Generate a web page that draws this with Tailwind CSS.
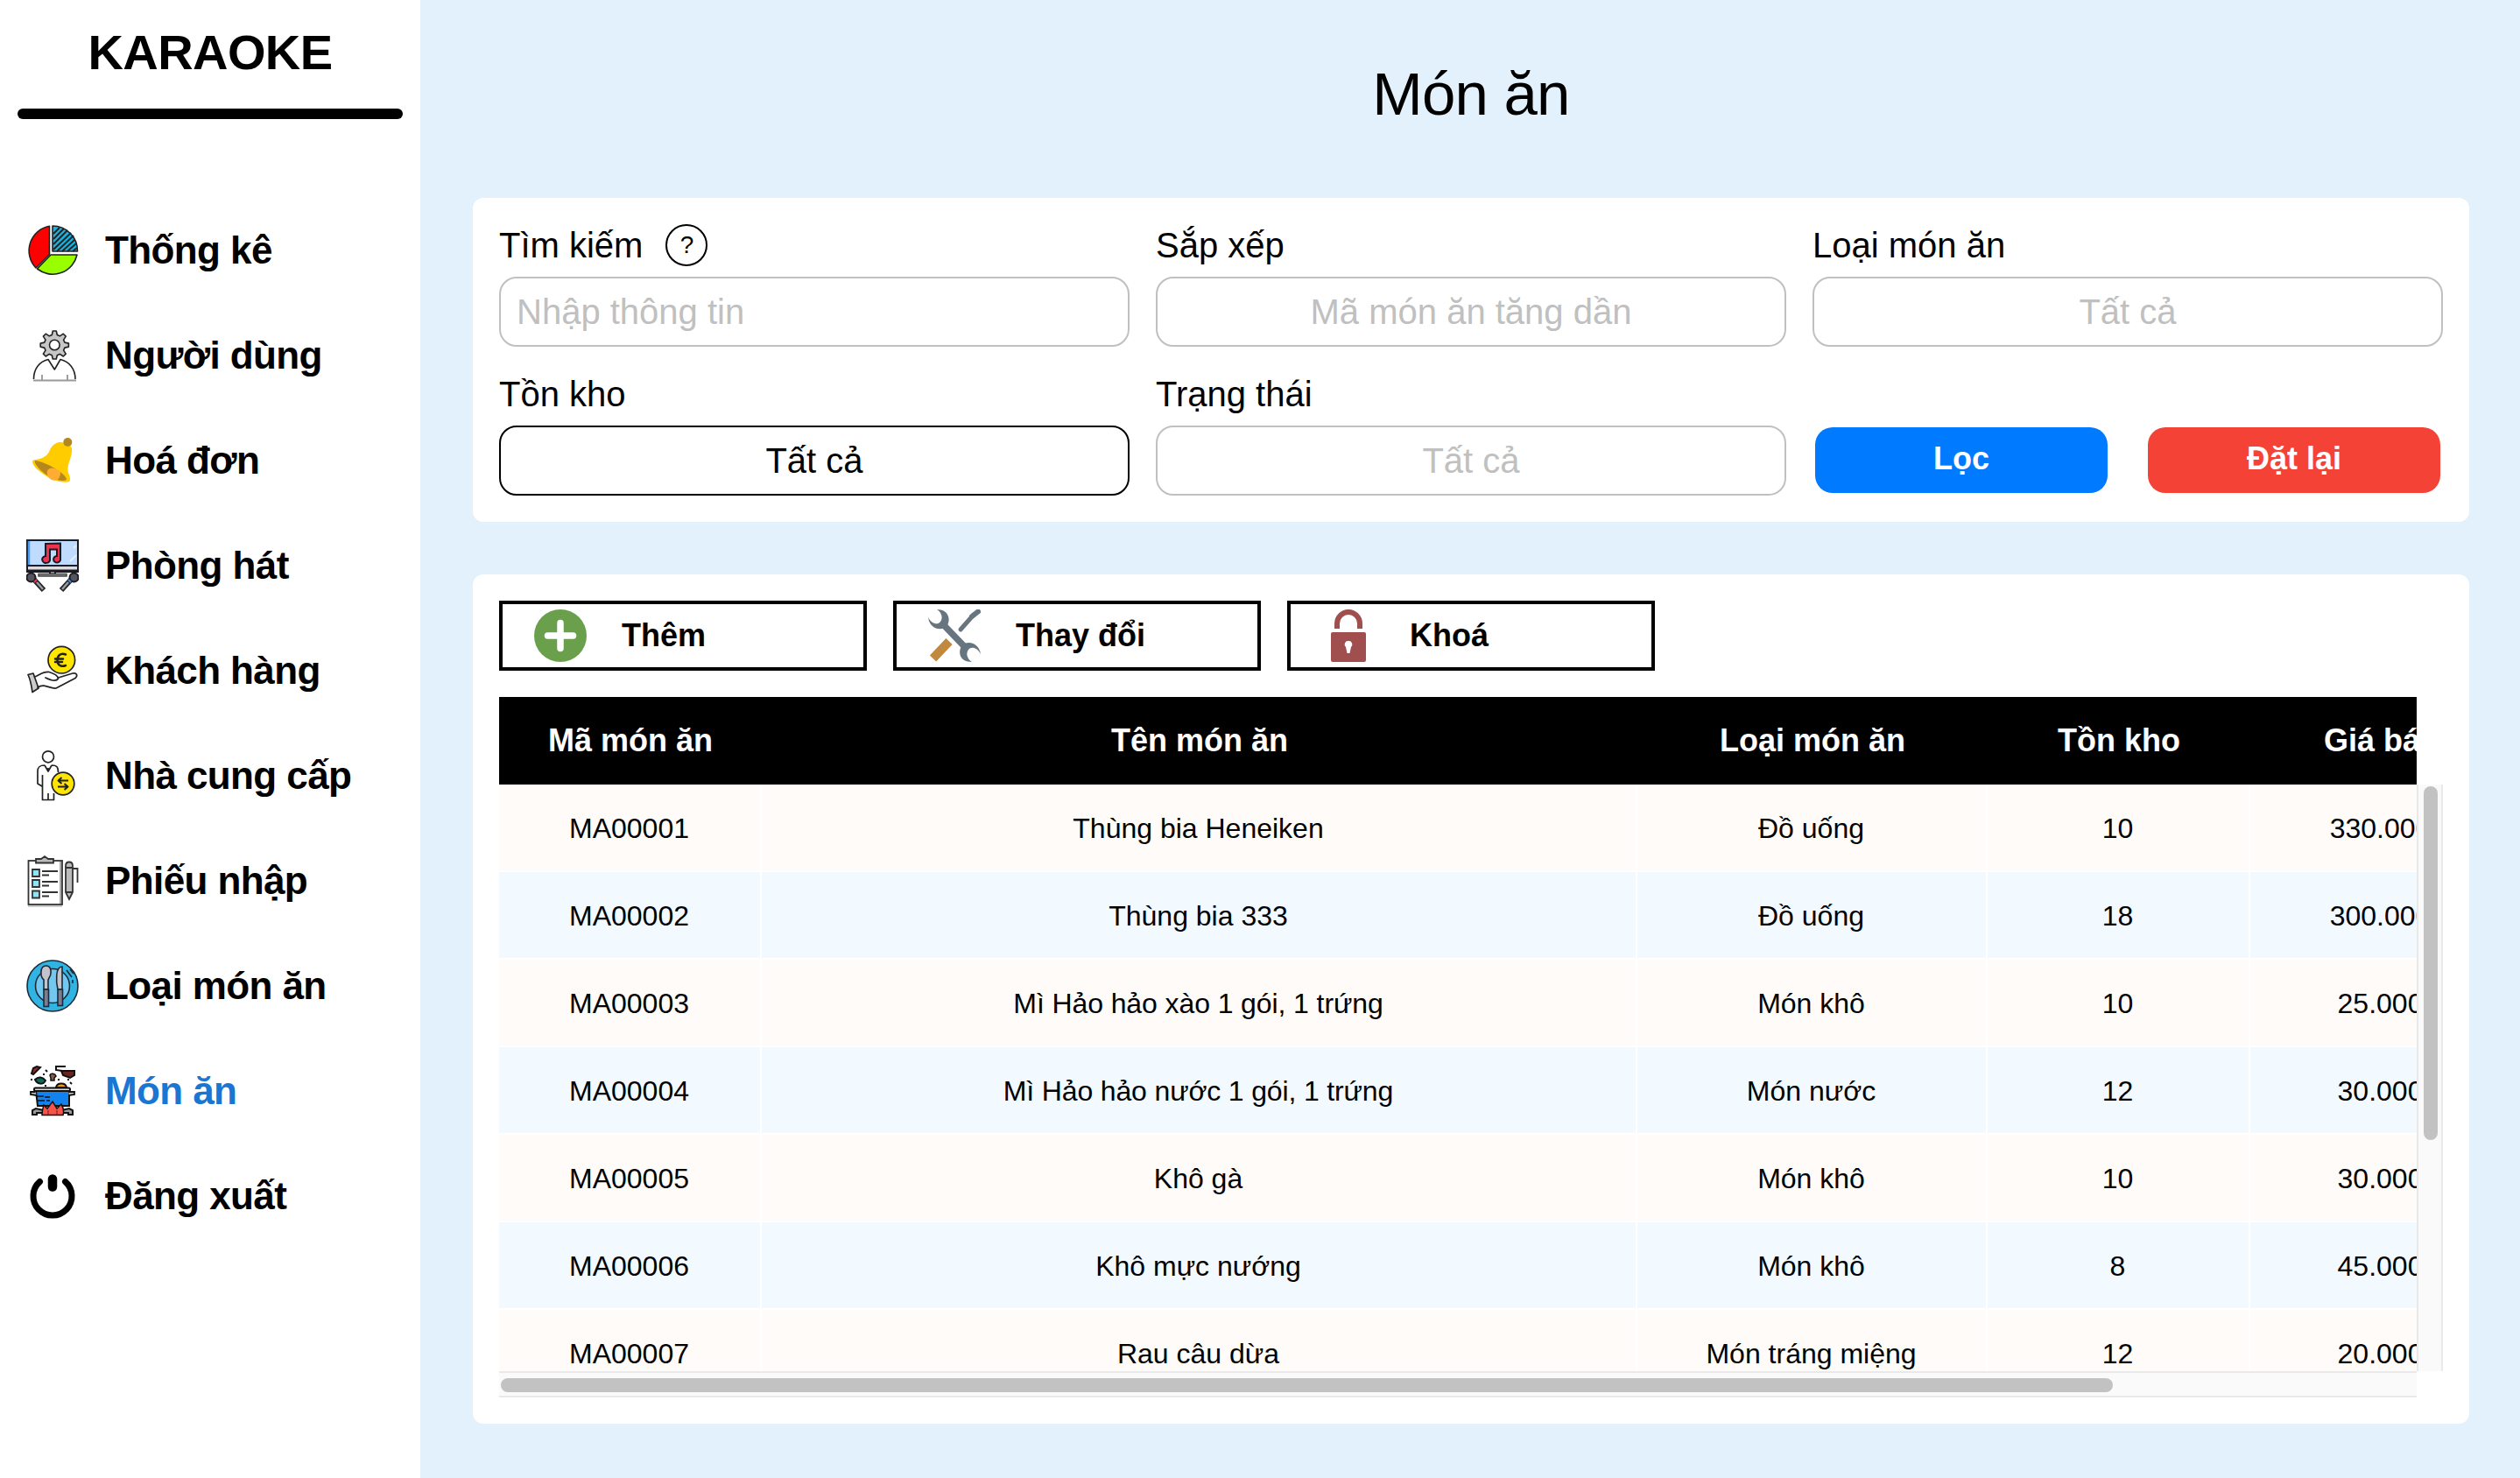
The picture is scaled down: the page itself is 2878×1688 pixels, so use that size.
<!DOCTYPE html>
<html lang="vi">
<head>
<meta charset="utf-8">
<title>Karaoke - Món ăn</title>
<script src="https://cdn.jsdelivr.net/npm/@tailwindcss/browser@4"></script>
</head>
<body class="flex h-[1688px] w-[2878px] overflow-hidden bg-[#e3f1fd] font-['Liberation_Sans',Arial,sans-serif] text-black">

<aside class="flex h-full w-[480px] shrink-0 flex-col bg-white">
  <h1 class="h-[124px] pt-[30px] text-center text-[56px] leading-[60px] font-bold tracking-[-0.6px]">KARAOKE</h1>
  <div class="mx-5 h-3 rounded-full bg-black"></div>
  <nav class="mt-[90px] flex flex-col text-[44px] font-bold tracking-[-0.6px] [&>a]:flex [&>a]:h-[120px] [&>a]:items-center [&>a]:gap-[30px] [&>a]:pl-[30px] [&_svg]:size-[60px] [&_svg]:shrink-0">
    <a>
      <svg viewBox="0 0 60 60" stroke="#222" stroke-width="1.6" stroke-linejoin="round">
        <path d="M26.500 2.300A28.500 28.500 0 0 0 11 50L26.500 34.500Z" fill="#f00"/>
        <path d="M30 2A28.500 28.500 0 0 1 58.500 31H30Z" fill="#12b5e5"/>
        <path d="M31 11l7-7M31 17L43 5M31 23L47 7M31 29L51 10M35 31L54 13M41 31l14-13M47 31l10-9M53 31l5-4" fill="none" stroke-width="2"/>
        <path d="M28 35H58A28.500 28.500 0 0 1 12.500 51Z" fill="#9f0"/>
      </svg>
      <span>Thống kê</span>
    </a>
    <a>
      <svg viewBox="0 0 60 60" stroke="#222" stroke-width="1.600" stroke-linejoin="round">
        <path d="M30.300 2h4l1 4.500 3 1.300 4-2.600 2.900 2.900-2.600 4 1.300 3 4.500 1v4l-4.500 1-1.300 3 2.600 4-2.900 2.900-4-2.600-3 1.300-1 4.300h-4l-1-4.300-3-1.300-4 2.600-2.900-2.900 2.600-4-1.300-3-4.500-1v-4l4.500-1 1.300-3-2.600-4 2.900-2.900 4 2.600 3-1.300z" fill="#c6c6c6"/>
        <circle cx="32.300" cy="18" r="5.800" fill="#fff"/>
        <path d="M8.500 57C8.500 45 15 37 25 34.500L32.300 46 39 34.500C49 37 56 45 56 57" fill="none"/>
        <path d="M18 52v6M47 52v6" stroke="#888" fill="none"/>
        <path d="M8 58.500h49" stroke="#999" stroke-width="2" fill="none"/>
      </svg>
      <span>Người dùng</span>
    </a>
    <a>
      <svg viewBox="0 0 60 60">
        <path d="M7 31C8 27 20 31 26 20 30 10 37 7 44 10 50 11 53 15 52 20 51 30 46 34 48 44 50 48 51 52 49 54 45 56 36 54 29 51 17 45 7 37 7 31Z" fill="#fc0"/>
        <path d="M10 30C20 31 42 42 46 51 45 55 33 52 27 49 17 43 8 33 10 30Z" fill="#b4881c"/>
        <path d="M24 42C27 36 35 39 39 43 39 52 34 54 29 52 25 50 23 46 24 42Z" fill="#ffac33"/>
        <circle cx="47.300" cy="9" r="5" fill="#b4881c"/>
      </svg>
      <span>Hoá đơn</span>
    </a>
    <a>
      <svg viewBox="0 0 60 60" stroke="#1b1b22" stroke-width="2">
        <rect x="1" y="1" width="58" height="36" fill="#bfdcff"/>
        <path d="M3 2v27" stroke="#4c9bf5" stroke-width="2.500"/>
        <path d="M54 10l3-3M50 25l7-7" stroke="#e4f0ff"/>
        <rect x="1" y="30" width="58" height="5.500" fill="#ddd"/>
        <path d="M22 5L39 4.500V22a4 3.800 0 1 1-4-3V11.500H27V22a4.500 4 0 1 1-5-3Z" fill="#f2304f"/>
        <rect x="27" y="36" width="6" height="4" fill="#888"/>
        <rect x="14" y="39.500" width="32" height="2.500" fill="#999" stroke="#444" stroke-width="1.500"/>
        <path d="M9 46L20 58M51 46L40 58" stroke="#26262c" stroke-width="6"/>
        <path d="M12 49L19 57M48 49L41 57" stroke="#9a9aa2" stroke-width="2.500"/>
        <circle cx="5.500" cy="43.500" r="5" fill="#555560"/>
        <circle cx="54.500" cy="43.500" r="5" fill="#555560"/>
        <path d="M9 49l3-3" stroke="#e8384f"/><path d="M51 49l-3-3" stroke="#3d8de8"/>
      </svg>
      <span>Phòng hát</span>
    </a>
    <a>
      <svg viewBox="0 0 60 60" stroke="#222" stroke-width="1.700" stroke-linejoin="round" stroke-linecap="round" fill="none">
        <circle cx="40.300" cy="17.700" r="15.300" fill="#ffe600"/>
        <path d="M45 11.500C39 9 35.500 13 35.500 18S39 26.500 45 24M33 16.500h9M33 20h8" stroke-width="2.500"/>
        <path d="M2 34.500L8 33 14 50 7 54.500C6 47 5 41 2 34.500Z" fill="#ccc"/>
        <path d="M9.500 37C14 36 18 31 26 31.500 31 33 36 35 36.500 39 34 43 28 41 22 38M36.500 38L53 33C58 32 59 36 56 38.500L34 50C27 51 21 44 13 49"/>
      </svg>
      <span>Khách hàng</span>
    </a>
    <a>
      <svg viewBox="0 0 60 60" stroke="#222" stroke-width="1.700" stroke-linejoin="round" fill="none">
        <circle cx="25" cy="8.300" r="6.500"/>
        <path d="M21 18C15 18 13 20 13 25V39L18 42M18.500 29V57.500H31.500V50M25 50v7M29 18C35 18 36.500 20 36.500 26M21 18l4 7 4-7M25 25v-4M18.500 29v12"/>
        <circle cx="42" cy="39" r="12.800" fill="#ffe600"/>
        <path d="M48 35.500H37M40.500 32L36.500 35.500 40.500 39M36 42.500H47M43.500 39L47.500 42.500 43.500 46" stroke-width="2"/>
      </svg>
      <span>Nhà cung cấp</span>
    </a>
    <a>
      <svg viewBox="0 0 60 60" stroke="#333" stroke-width="1.800" fill="none">
        <rect x="2.500" y="7" width="38.500" height="50" fill="#fff"/>
        <path d="M39 8v48" stroke="#aaa" stroke-width="2"/><path d="M2 59h39" stroke="#ccc" stroke-width="2"/>
        <path d="M11 9.500V5H17L21 2 25 5H31V9.500Z" fill="#bbb"/>
        <path d="M7 17h8v8H7zM7 29h8v8H7zM7 41.500h8v8H7z" fill="#8ee3f5"/>
        <path d="M18 19H36M18 23.500H26M18 31H36M18 35.500H26M18 43H36M18 47.500H26"/>
        <path d="M45 13C45 7 53 7 53 13V43L49 51 45 43Z" fill="#bbb"/>
        <path d="M45 15h8M45 43h8M53 16h5.500V32"/>
      </svg>
      <span>Phiếu nhập</span>
    </a>
    <a>
      <svg viewBox="0 0 60 60" stroke="#1d2b36" stroke-width="1.600">
        <circle cx="30" cy="30" r="29" fill="#31b4e3"/>
        <circle cx="30" cy="30" r="19.500" fill="#74c8f0"/>
        <path d="M46 12l6 8M50 11l4 5M53 23v4" fill="none"/>
        <path d="M22.500 7C28 7 29 13 27.500 18L25 23V34H20V23C16 20 15 7 22.500 7Z" fill="#c5c3cc"/>
        <rect x="20" y="34" width="5.500" height="19.500" fill="#7f7c90"/>
        <path d="M41 8V34H36C34 25 33 8 41 8Z" fill="#c5c3cc"/>
        <rect x="36" y="34" width="5.500" height="18.500" fill="#7f7c90"/>
      </svg>
      <span>Loại món ăn</span>
    </a>
    <a class="text-[#1976d2]">
      <svg viewBox="0 0 60 60" stroke="#111" stroke-width="2">
        <path d="M6 10L8 4 12 2 16 3 12 7 8 11Z" fill="#8d2f2b"/>
        <path d="M45 2H34V6L41 7" fill="none"/>
        <path d="M40 7H55V12L50 15 42 12Z" fill="#6d2420"/>
        <path d="M10 17C14 13 19 14 22 18 20 23 13 23 10 17Z" fill="#0e6a58"/>
        <path d="M27 12C28 9 33 10 34 13L32 15V18H28V15Z" fill="#8a5a48" stroke-width="1.500"/>
        <path d="M34 26C35 20 45 20 46 26Z" fill="#f39c12"/>
        <path d="M19 11h2M36 17h2M47 17h2M5 17h2M21 24h2M50 20l2 2M22 6l2 2" fill="none"/>
        <path d="M11 30H49V47H13Z" fill="#1283ee"/>
        <path d="M12 36h8M21 37h6M13 41h8M23 41h4" stroke-width="1.500"/>
        <path d="M10 31H5V34L12 35M49 31H55V34L48 35" fill="#ccc" stroke-width="1.800"/>
        <rect x="9" y="26.500" width="41" height="3.500" rx="1.500" fill="#ddd"/>
        <path d="M7 57V52L11 50 20 52V55H12V57ZM53 57V52L49 50 40 52V55H48V57Z" fill="#999"/>
        <path d="M18 57.500C18 52 19 50 20 46L24 50 30 42 35 50 40 45C43 50 43 54 42 57.500Z" fill="#f4544a" stroke-width="1.500"/>
        <path d="M25 52v5M35 52v5" stroke="#a82a22" fill="none" stroke-width="1.500"/>
      </svg>
      <span>Món ăn</span>
    </a>
    <a>
      <svg viewBox="0 0 60 60" fill="none" stroke="#000" stroke-linecap="round">
        <path d="M15.500 13.500A22 22 0 1 0 44.500 13.500" stroke-width="7"/>
        <path d="M30 10.500V19.500" stroke-width="10.500"/>
      </svg>
      <span>Đăng xuất</span>
    </a>
  </nav>
</aside>

<main class="flex min-w-0 flex-1 flex-col px-[60px] pr-[58px]">
  <h2 class="h-[226px] pt-[68px] text-center text-[69px] leading-[80px] tracking-[-0.8px]">Món ăn</h2>

  <section class="grid h-[370px] grid-cols-3 content-start gap-x-[30px] gap-y-[30px] rounded-xl bg-white p-[30px] text-[40px]">
    <div class="flex flex-col">
      <div class="flex h-[60px] items-start gap-[26px] leading-[48px]">
        <span>Tìm kiếm</span>
        <span class="flex size-12 items-center justify-center rounded-full border-2 border-black text-[28px]">?</span>
      </div>
      <div class="flex h-20 items-center rounded-[20px] border-2 border-[#c0c0c0] pl-[18px] text-[#c0c0c0]">Nhập thông tin</div>
    </div>
    <div class="flex flex-col">
      <div class="h-[60px] leading-[48px]">Sắp xếp</div>
      <div class="flex h-20 items-center justify-center rounded-[20px] border-2 border-[#c0c0c0] text-[#c0c0c0]">Mã món ăn tăng dần</div>
    </div>
    <div class="flex flex-col">
      <div class="h-[60px] leading-[48px]">Loại món ăn</div>
      <div class="flex h-20 items-center justify-center rounded-[20px] border-2 border-[#c0c0c0] text-[#c0c0c0]">Tất cả</div>
    </div>
    <div class="flex flex-col">
      <div class="h-[60px] leading-[48px]">Tồn kho</div>
      <div class="flex h-20 items-center justify-center rounded-[20px] border-2 border-black">Tất cả</div>
    </div>
    <div class="flex flex-col">
      <div class="h-[60px] leading-[48px]">Trạng thái</div>
      <div class="flex h-20 items-center justify-center rounded-[20px] border-2 border-[#c0c0c0] text-[#c0c0c0]">Tất cả</div>
    </div>
    <div class="flex gap-[46px] px-[3px] pt-[62px] text-[36px] font-bold text-white">
      <button class="h-[75px] flex-1 rounded-[20px] bg-[#007aff] pb-1">Lọc</button>
      <button class="h-[75px] flex-1 rounded-[20px] bg-[#f44336] pb-1">Đặt lại</button>
    </div>
  </section>

  <section class="mt-[60px] flex h-[970px] flex-col rounded-xl bg-white p-[30px]">
    <div class="flex gap-[30px] text-[36px] font-bold [&>button]:flex [&>button]:h-20 [&>button]:w-[420px] [&>button]:items-center [&>button]:gap-[40px] [&>button]:border-4 [&>button]:border-black [&>button]:pl-9 [&_svg]:size-[60px]">
      <button>
        <svg viewBox="0 0 60 60"><circle cx="30" cy="30" r="30" fill="#6aa04c"/><path d="M30 15.500V44.500M15.500 30H44.500" stroke="#fff" stroke-width="7.500" stroke-linecap="round"/></svg>
        <span>Thêm</span>
      </button>
      <button>
        <svg viewBox="0 0 60 60" fill="none" stroke="#66757f">
          <path d="M37 23L52 6" stroke-width="5" stroke-linecap="round"/><path d="M50 8L57 2.500" stroke-width="6" stroke-linecap="round"/>
          <path d="M24 36.500L5.500 56" stroke="#c1893e" stroke-width="10"/>
          <path d="M17 17L42 43" stroke-width="7.500"/>
          <path d="M10 0C23 0 26 11 22 18 17 25 2 24 0 9 4 17 11 18 14 14 17 10 16 4 10 0ZM50 60C36 60 34 49 38 42 43 35 58 37 60 51 56 43 49 42 46 46 43 50 44 56 50 60Z" fill="#66757f" stroke="none"/>
        </svg>
        <span>Thay đổi</span>
      </button>
      <button>
        <svg viewBox="0 0 60 60"><path d="M17 22V16A13 13 0 0 1 43 16V22" fill="none" stroke="#a04e4e" stroke-width="6"/><rect x="10" y="26" width="40" height="34" rx="2" fill="#a04e4e"/><path d="M30 36a4 4 0 0 1 3 7L31.500 50H28.500L27 43a4 4 0 0 1 3-7Z" fill="#fff"/></svg>
        <span>Khoá</span>
      </button>
    </div>

    <div class="mt-[30px] grid grid-cols-[2190px_30px] grid-rows-[100px_670px_30px]">
      <div class="overflow-hidden bg-black">
        <div class="grid h-full w-[2300px] grid-cols-[300px_1000px_400px_300px_300px] items-center text-center text-[36px] font-bold text-white">
          <div>Mã món ăn</div><div>Tên món ăn</div><div>Loại món ăn</div><div>Tồn kho</div><div>Giá bán</div>
        </div>
      </div>
      <div></div>
      <div class="overflow-hidden">
        <div class="grid w-[2300px] auto-rows-[100px] text-center text-[32px] leading-[100px] [&>div]:grid [&>div]:grid-cols-[300px_1000px_400px_300px_300px] [&>div]:border-b-2 [&>div]:border-white [&>div>p]:h-[98px] [&>div>p]:border-r-2 [&>div>p]:border-white [&>div>p]:pr-[1px] [&>div:nth-child(odd)]:bg-[#fffbf8] [&>div:nth-child(even)]:bg-[#f2f9ff]">
          <div><p>MA00001</p><p>Thùng bia Heneiken</p><p>Đồ uống</p><p>10</p><p>330.000</p></div>
          <div><p>MA00002</p><p>Thùng bia 333</p><p>Đồ uống</p><p>18</p><p>300.000</p></div>
          <div><p>MA00003</p><p class="tracking-[-0.1px]">Mì Hảo hảo xào 1 gói, 1 trứng</p><p>Món khô</p><p>10</p><p>25.000</p></div>
          <div><p>MA00004</p><p class="tracking-[-0.15px]">Mì Hảo hảo nước 1 gói, 1 trứng</p><p>Món nước</p><p>12</p><p>30.000</p></div>
          <div><p>MA00005</p><p>Khô gà</p><p>Món khô</p><p>10</p><p>30.000</p></div>
          <div><p>MA00006</p><p>Khô mực nướng</p><p>Món khô</p><p>8</p><p>45.000</p></div>
          <div><p>MA00007</p><p>Rau câu dừa</p><p>Món tráng miệng</p><p>12</p><p>20.000</p></div>
        </div>
      </div>
      <div class="border-x-2 border-[#e9e9e9] bg-[#fafafa] pt-[2px] pl-[6px]">
        <div class="h-[404px] w-4 rounded-full bg-[#c2c2c2]"></div>
      </div>
      <div class="border-y-2 border-[#e9e9e9] bg-[#fafafa] pt-[6px] pl-[2px]">
        <div class="h-4 w-[1841px] rounded-full bg-[#c2c2c2]"></div>
      </div>
    </div>
  </section>
</main>
</body>
</html>
